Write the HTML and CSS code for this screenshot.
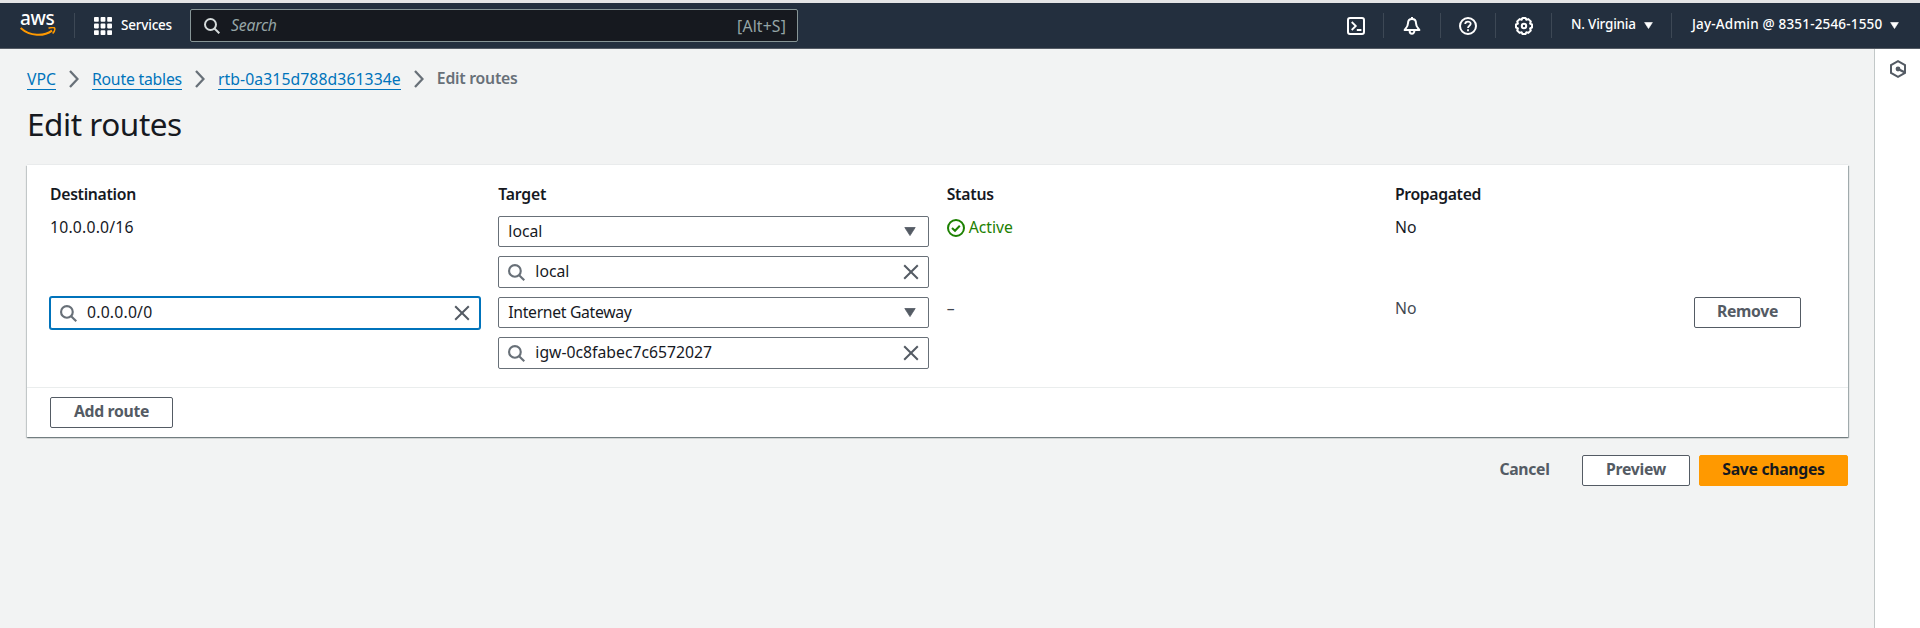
FILE: index.html
```html
<!DOCTYPE html>
<html lang="en">
<head>
<meta charset="utf-8">
<title>Edit routes | VPC</title>
<link rel="stylesheet" href="styles.css">
</head>
<body>
<svg class="defs" width="0" height="0" aria-hidden="true">
  <symbol id="search" viewBox="0 0 16 16"><g fill="none" stroke="currentColor" stroke-width="2"><circle cx="6.5" cy="6.5" r="5.5"/><path d="M10.5 10.5L15.3 15.3"/></g></symbol>
  <symbol id="close" viewBox="0 0 16 16"><path d="M1.2 1.2L14.8 14.8M14.8 1.2L1.2 14.8" fill="none" stroke="currentColor" stroke-width="2"/></symbol>
  <symbol id="chevron" viewBox="0 0 10 18"><path d="M1 1L8.5 9L1 17" fill="none" stroke="currentColor" stroke-width="2.3"/></symbol>
  <symbol id="caret" viewBox="0 0 12 9"><path d="M.8 .5H11.2L6 8.6Z" fill="currentColor" stroke="currentColor" stroke-width=".8" stroke-linejoin="round"/></symbol>
</svg>
<header class="nav">
  <div class="nav-logo">
    <span class="logo-word">aws</span>
    <svg class="logo-smile" width="36" height="9" viewBox="0 0 36 9"><path d="M.6 1C10 9.6 24 9.6 32 3.6" fill="none" stroke="#f90" stroke-width="2"/><path d="M28.5 1.3C31 .3 34 .3 34.6 1C35.1 2 34.2 4.8 32.6 6.6" fill="none" stroke="#f90" stroke-width="1.5"/></svg>
  </div>
  <div class="nav-services">
    <svg width="18" height="18" viewBox="0 0 18 18" fill="#fff"><rect width="4.8" height="4.8" rx=".8"/><rect x="6.6" width="4.8" height="4.8" rx=".8"/><rect x="13.2" width="4.8" height="4.8" rx=".8"/><rect y="6.6" width="4.8" height="4.8" rx=".8"/><rect x="6.6" y="6.6" width="4.8" height="4.8" rx=".8"/><rect x="13.2" y="6.6" width="4.8" height="4.8" rx=".8"/><rect y="13.2" width="4.8" height="4.8" rx=".8"/><rect x="6.6" y="13.2" width="4.8" height="4.8" rx=".8"/><rect x="13.2" y="13.2" width="4.8" height="4.8" rx=".8"/></svg>
    <span class="t-services">Services</span>
  </div>
  <div class="nav-search">
    <svg class="nav-search-icon"><use href="#search"/></svg>
    <span class="nav-placeholder">Search</span>
    <span class="nav-shortcut">[Alt+S]</span>
  </div>
  <div class="nav-right">
    <div class="nav-item w-shell"><svg width="18" height="18" viewBox="0 0 18 18" fill="none" stroke="#fff" stroke-width="2"><rect x="1" y="1" width="16" height="16" rx="2"/><path d="M4.7 5L8.8 9L4.7 13M9.8 13H14.4" stroke-width="1.8"/></svg></div>
    <div class="nav-item w-bell"><svg width="18" height="18" viewBox="0 0 18 18" fill="none" stroke="#fff" stroke-width="2"><path d="M9 2C6.2 2 5 4 5 6.2C5 9.5 3.2 10.8 1.6 13H16.4C14.8 10.8 13 9.5 13 6.2C13 4 11.8 2 9 2Z" stroke-linejoin="round"/><path d="M9 0V2M6.6 13.5C6.6 17.9 11.4 17.9 11.4 13.5"/></svg></div>
    <div class="nav-item w-help"><svg width="18" height="18" viewBox="0 0 18 18" fill="none" stroke="#fff" stroke-width="2"><circle cx="9" cy="9" r="8"/><path d="M6.2 7C6.2 3.7 11.7 3.8 11.7 6.8C11.7 8.7 9 8.7 9 11M9 12.3V14.3" stroke-width="1.8"/></svg></div>
    <div class="nav-item w-gear"><svg width="18" height="18" viewBox="0 0 18 18" fill="none" stroke="#fff" stroke-width="2"><path d="M7.5 1H10.5L11.4 2.8L13.4 2.1L15.8 4.5L15.1 6.6L17 7.5V10.5L15.1 11.4L15.8 13.5L13.4 15.9L11.4 15.2L10.5 17H7.5L6.6 15.2L4.6 15.9L2.2 13.5L2.9 11.4L1 10.5V7.5L2.9 6.6L2.2 4.5L4.6 2.1L6.6 2.8Z" stroke-linejoin="round"/><circle cx="9" cy="9" r="2.2"/></svg></div>
    <div class="nav-item w-region"><span class="t-region">N. Virginia</span><svg class="nav-caret"><use href="#caret"/></svg></div>
    <div class="nav-item w-user"><span class="t-user">Jay-Admin @ 8351-2546-1550</span><svg class="nav-caret"><use href="#caret"/></svg></div>
  </div>
</header>
<div class="body">
  <main class="main">
    <nav class="crumbs">
      <a class="t-vpc">VPC</a><svg class="chevron"><use href="#chevron"/></svg>
      <a class="t-tables">Route tables</a><svg class="chevron"><use href="#chevron"/></svg>
      <a class="t-rtb">rtb-0a315d788d361334e</a><svg class="chevron"><use href="#chevron"/></svg>
      <span class="t-here">Edit routes</span>
    </nav>
    <h1 class="title"><span class="t-title">Edit routes</span></h1>
    <section class="card">
      <div class="routes">
        <div class="row head">
          <div><span class="t-dest">Destination</span></div><div><span class="t-target">Target</span></div><div><span class="t-status">Status</span></div><div><span class="t-prop">Propagated</span></div>
        </div>
        <div class="row">
          <div class="cell"><span class="t-cidr">10.0.0.0/16</span></div>
          <div class="stack">
            <div class="select"><span class="t-local">local</span><svg class="caret"><use href="#caret"/></svg></div>
            <div class="input"><svg class="search"><use href="#search"/></svg><span class="t-local">local</span><svg class="close"><use href="#close"/></svg></div>
          </div>
          <div class="cell active"><svg width="18" height="18" viewBox="0 0 18 18" fill="none" stroke="currentColor" stroke-width="2"><circle cx="9" cy="9" r="8"/><path d="M5 9L8 11.8L12.8 6.8"/></svg><span class="t-active">Active</span></div>
          <div class="cell"><span class="t-no">No</span></div>
        </div>
        <div class="row">
          <div><div class="input focus"><svg class="search"><use href="#search"/></svg><span class="t-zero">0.0.0.0/0</span><svg class="close"><use href="#close"/></svg></div></div>
          <div class="stack">
            <div class="select"><span class="t-gateway">Internet Gateway</span><svg class="caret"><use href="#caret"/></svg></div>
            <div class="input"><svg class="search"><use href="#search"/></svg><span class="t-igw">igw-0c8fabec7c6572027</span><svg class="close"><use href="#close"/></svg></div>
          </div>
          <div class="cell dim"><span>–</span></div>
          <div class="cell dim"><span class="t-no">No</span></div>
          <div class="remove"><button class="btn b-remove"><span class="t-remove">Remove</span></button></div>
        </div>
      </div>
      <div class="card-foot"><button class="btn b-add"><span class="t-add">Add route</span></button></div>
    </section>
    <div class="actions">
      <button class="btn link"><span class="t-cancel">Cancel</span></button>
      <button class="btn b-preview"><span class="t-preview">Preview</span></button>
      <button class="btn primary b-save"><span class="t-save">Save changes</span></button>
    </div>
  </main>
  <aside class="rail"><svg width="16" height="18" viewBox="0 0 16 18" fill="none" stroke="#545b64" stroke-width="2"><path d="M8 1.2L15 5V13L8 16.8L1 13V5Z"/><path d="M8 9L14.5 12.3" stroke-width="2.4"/><circle cx="8" cy="9" r="2.4" fill="#545b64" stroke="none"/></svg></aside>
</div>
</body>
</html>
```
FILE: styles.css
```css
* { box-sizing: border-box; }
body {
  margin: 0;
  height: 628px;
  overflow: hidden;
  display: flex;
  flex-direction: column;
  background: #f2f3f3;
  border-top: 3px solid #e4e4e5;
  font: 15.75px/24px "Noto Sans", "Open Sans", sans-serif;
  color: #16191f;
}
svg { display: block; flex: none; }
span, a { white-space: nowrap; }
.defs { position: absolute; }

.nav {
  flex: none;
  height: 46px;
  display: flex;
  align-items: center;
  background: #232f3e;
  border-bottom: 1px solid #545b64;
  color: #fff;
  font-size: 13.5px;
  font-weight: 500;
}
.nav-logo {
  width: 75px;
  height: 25px;
  padding-left: 20px;
  border-right: 1px solid #3d4855;
}
.logo-word {
  display: block;
  height: 14px;
  font: 500 19px/10px "Noto Sans", sans-serif;
  letter-spacing: -.3px;
}
.nav-services {
  width: 115px;
  padding-left: 19px;
  display: flex;
  align-items: center;
  gap: 9px;
}
.t-services { letter-spacing: -.2px; margin-top: -1px; }
.nav-search {
  width: 608px;
  height: 33px;
  padding: 0 11px 0 13px;
  display: flex;
  align-items: center;
  background: #16191f;
  border: 1px solid #879596;
  border-radius: 2px;
  color: #95a5a6;
  font-size: 15.75px;
  font-weight: 400;
}
.nav-search-icon { width: 16px; height: 16px; color: #d5dbdb; }
.nav-placeholder { margin: -1px 0 0 11px; font-style: italic; letter-spacing: -.2px; }
.nav-shortcut { margin-left: auto; letter-spacing: .15px; }
.nav-right { margin-left: auto; display: flex; }
.nav-item {
  height: 25px;
  display: flex;
  align-items: center;
  border-right: 1px solid #3d4855;
}
.nav-item:last-child { border-right: 0; }
.w-shell { width: 37px; }
.w-bell { width: 57px; padding-left: 19px; }
.w-help { width: 55px; padding-left: 18px; }
.w-gear { width: 56px; padding-left: 19px; }
.w-region { width: 120px; padding-left: 19px; }
.w-user { width: 248px; padding-left: 20px; }
.t-region { margin-top: -3px; letter-spacing: -.2px; }
.t-user { margin-top: -3px; letter-spacing: .18px; }
.nav-caret { width: 9px; height: 7px; margin-left: 8px; }

.body { flex: 1; display: flex; }
.main { flex: 1; padding: 18px 26px 0 27px; }
.rail {
  width: 46px;
  padding: 11px 0 0 15px;
  background: #fff;
  border-left: 1px solid #c2c8c8;
}
.crumbs { height: 24px; display: flex; align-items: center; }
.crumbs a {
  height: 22px;
  margin-top: -1px;
  line-height: 22px;
  color: #0073bb;
  border-bottom: 1px solid #0073bb;
}
.crumbs span { margin-top: -2px; color: #687078; font-weight: 600; }
.t-tables { letter-spacing: -.2px; }
.t-rtb { letter-spacing: .08px; }
.t-here { letter-spacing: -.22px; }
.chevron { width: 10px; height: 18px; margin: 0 13px; color: #687078; }
.title {
  margin: 15px 0 0;
  font-size: 31.5px;
  font-weight: 400;
  line-height: 36px;
}
.t-title { letter-spacing: -.45px; }
.card {
  width: 1821px;
  height: 272px;
  margin-top: 23px;
  background: #fff;
  box-shadow: 0 1px 1px #5f6b6c99, 1px 1px 1px #001c244d, -1px 1px 1px #001c2426, 0 -1px 0 #e9ebec;
}
.routes { height: 222px; padding: 17px 22px 0 23px; }
.row {
  display: grid;
  grid-template-columns: repeat(3, 430.33px) 281px 1fr;
  column-gap: 18px;
  height: 81px;
}
.head { height: 34px; font-weight: 600; }
.t-dest { letter-spacing: -.3px; }
.t-target, .t-status { letter-spacing: -.2px; }
.t-prop { letter-spacing: -.35px; }
.t-cidr, .t-zero { letter-spacing: .2px; }
.cell { height: 23px; padding-bottom: 1px; display: flex; align-items: center; }
.active { color: #1d8102; gap: 4px; padding-bottom: 0; }
.t-active { margin-top: -1px; }
.dim { color: #414750; }
.stack { display: flex; flex-direction: column; gap: 9px; }
.select, .input {
  height: 31px;
  display: flex;
  align-items: center;
  padding: 0 12px 0 9px;
  background: #fff;
  border: 1px solid #687078;
  border-radius: 2px;
}
.select span, .input span { margin-top: -2px; }
.t-gateway { letter-spacing: -.33px; }
.input { height: 32px; padding-right: 9px; }
.caret { width: 12px; height: 9px; margin-left: auto; color: #545b64; }
.search { width: 17px; height: 17px; margin-right: 10px; color: #687078; }
.close { width: 16px; height: 16px; margin-left: auto; color: #545b64; }
.focus { border-color: #0073bb; box-shadow: 0 0 0 1px #0073bb; }
.btn {
  height: 31px;
  padding: 0 0 3px;
  background: #fff;
  border: 1px solid #545b64;
  border-radius: 2px;
  color: #545b64;
  font: 700 15.75px/24px "Noto Sans", "Open Sans", sans-serif;
  letter-spacing: -.3px;
}
.b-remove { width: 107px; }
.b-add { width: 123px; }
.b-preview { width: 108px; }
.b-save { width: 149px; }
.btn.link { width: 91px; background: none; border-color: transparent; }
.btn.primary { background: #f90; border-color: #f90; color: #16191f; }
.card-foot { height: 50px; padding: 9px 23px; border-top: 1px solid #eaeded; }
.actions {
  width: 1821px;
  margin-top: 18px;
  display: flex;
  justify-content: flex-end;
  gap: 9px;
}
.btn.link + .btn { margin-left: 3px; }
```
